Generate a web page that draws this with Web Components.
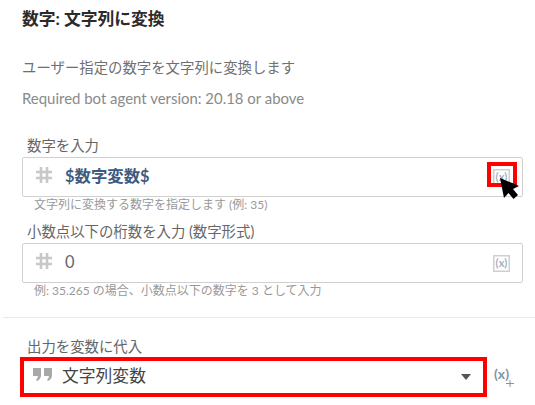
<!DOCTYPE html>
<html lang="ja"><head><meta charset="utf-8">
<style>
html,body{margin:0;padding:0;background:#fff;}
body{width:535px;height:405px;overflow:hidden;font-family:Lato,"Noto Sans CJK JP",sans-serif;}
</style></head><body>
<action-panel>
  <span slot="title">数字: 文字列に変換</span>
  <span slot="desc">ユーザー指定の数字を文字列に変換します</span>
  <span slot="ver">Required bot agent version: 20.18 or above</span>
  <num-field label="数字を入力" value="$数字変数$" hint="文字列に変換する数字を指定します (例: 35)" strong highlight></num-field>
  <num-field label="小数点以下の桁数を入力 (数字形式)" value="0" hint="例: 35.265 の場合、小数点以下の数字を 3 として入力"></num-field>
  <output-select slot="output" label="出力を変数に代入" value="文字列変数"></output-select>
</action-panel>
<script>
class ActionPanel extends HTMLElement{
  constructor(){super();this.attachShadow({mode:'open'}).innerHTML=`<style>
  :host{display:block;width:535px;height:405px;box-sizing:border-box;padding-top:10px;color:#333}
  .title{margin:0 0 0 22px;font-size:16.8px;font-weight:700;line-height:18px;color:#2b2b2b}
  .desc{margin:30px 0 0 22px;font-size:14.4px;line-height:20px;color:#6f6f6f}
  .ver{margin:10px 0 0 22px;font-size:14.95px;line-height:20px;color:#8a8a8a}
  .fields{display:flex;flex-direction:column;margin:29px 12px 0 22px;gap:11px}
  hr{border:0;border-top:1px solid #e9e9e9;margin:19px 0 0 3px}
  </style>
  <h1 class="title"><slot name="title"></slot></h1>
  <div class="desc"><slot name="desc"></slot></div>
  <div class="ver"><slot name="ver"></slot></div>
  <div class="fields"><slot></slot></div>
  <hr>
  <slot name="output"></slot>`;}
}
const varIcon=`<svg width="17" height="17" viewBox="0 0 17 17" aria-hidden="true"><rect x=".75" y=".75" width="15.5" height="15.5" fill="#fff" stroke="#cfcfcf" stroke-width="1.5"/><text x="8.5" y="12" text-anchor="middle" font-family="Lato,sans-serif" font-size="11" font-weight="700" fill="#a3afbd">(x)</text></svg>`;
class NumField extends HTMLElement{
  constructor(){super();this.attachShadow({mode:'open'});}
  connectedCallback(){
    const g=n=>this.getAttribute(n)||'';
    const strong=this.hasAttribute('strong'), hl=this.hasAttribute('highlight');
    this.shadowRoot.innerHTML=`<style>
    :host{display:block}
    .label{font-size:14.4px;line-height:18px;color:#666;margin-left:5px}
    .box{position:relative;display:flex;align-items:center;height:40px;box-sizing:border-box;border:1px solid #d0d0d0;border-radius:2px;background:#fff;margin-top:2px}
    .hash{width:18px;height:18px;margin:0 0 4px 12px;flex:none}
    .val{flex:1;font-size:16.4px;line-height:20px;font-weight:${strong?700:400};color:${strong?'#3d5a80':'#666'};margin:0 0 2px 12px}
    .ic{display:flex;margin-right:12px}
    .hint{font-size:12px;line-height:14px;color:#999;margin:1px 0 0 12px}
    .mark{position:absolute;right:5px;top:4px;width:30px;height:25px;box-sizing:border-box;border:4px solid #f00;pointer-events:none}
    .cursor{position:absolute;right:2px;top:20px;pointer-events:none}
    </style>
    <div class="label">${g('label')}</div>
    <div class="box">
      <svg class="hash" viewBox="0 0 18 18" aria-hidden="true"><path d="M6 1v16M12 1v16M1 6h16M1 12h16" stroke="#c8c8c8" stroke-width="2.6" fill="none"/></svg>
      <span class="val">${g('value')}</span>
      <span class="ic">${varIcon}</span>
      ${hl?`<span class="mark"></span><svg class="cursor" width="20" height="22" viewBox="0 0 20 22" aria-hidden="true"><path d="M0 0L4 20L8.500 15L13.500 21L18 17L13 11L19 8Z" fill="#000"/></svg>`:''}
    </div>
    <div class="hint">${g('hint')}</div>`;
  }
}
class OutputSelect extends HTMLElement{
  constructor(){super();this.attachShadow({mode:'open'});}
  connectedCallback(){
    const g=n=>this.getAttribute(n)||'';
    this.shadowRoot.innerHTML=`<style>
    :host{display:block;padding:20px 0 0 20px}
    .label{font-size:14.4px;line-height:18px;color:#666;margin-left:7px}
    .row{display:flex;align-items:center;margin-top:1px}
    .sel{display:flex;align-items:center;width:467px;height:40px;box-sizing:border-box;border:4px solid #f00;background:#fff}
    .q{margin:0 0 5px 9px;flex:none}
    .val{flex:1;font-size:16.8px;line-height:20px;color:#444;margin:0 0 3px 9px}
    .arrow{width:0;height:0;border:5.500px solid transparent;border-top:6px solid #555;border-bottom:0;margin-right:12px}
    .plus{position:relative;margin-left:7px;font-size:14px;font-weight:700;color:#8593a3;line-height:14px;top:-3px}
    .plus svg{position:absolute;left:12px;top:13px}
    </style>
    <div class="label">${g('label')}</div>
    <div class="row">
      <div class="sel">
        <svg class="q" width="20" height="15" viewBox="0 0 20 15" aria-hidden="true"><path d="M0 1h8v7q0 4-4 6l-1-1q2-2 2-4H0zM11 1h8v7q0 4-4 6l-1-1q2-2 2-4h-5z" fill="#a8a8a8"/></svg>
        <span class="val">${g('value')}</span>
        <span class="arrow"></span>
      </div>
      <span class="plus">(x)<svg width="8" height="7" viewBox="0 0 8 7" aria-hidden="true"><path d="M0 3.500h8M4 0v7" stroke="#8593a3" stroke-width="1"/></svg></span>
    </div>`;
  }
}
customElements.define('action-panel',ActionPanel);
customElements.define('num-field',NumField);
customElements.define('output-select',OutputSelect);
</script>
</body></html>
